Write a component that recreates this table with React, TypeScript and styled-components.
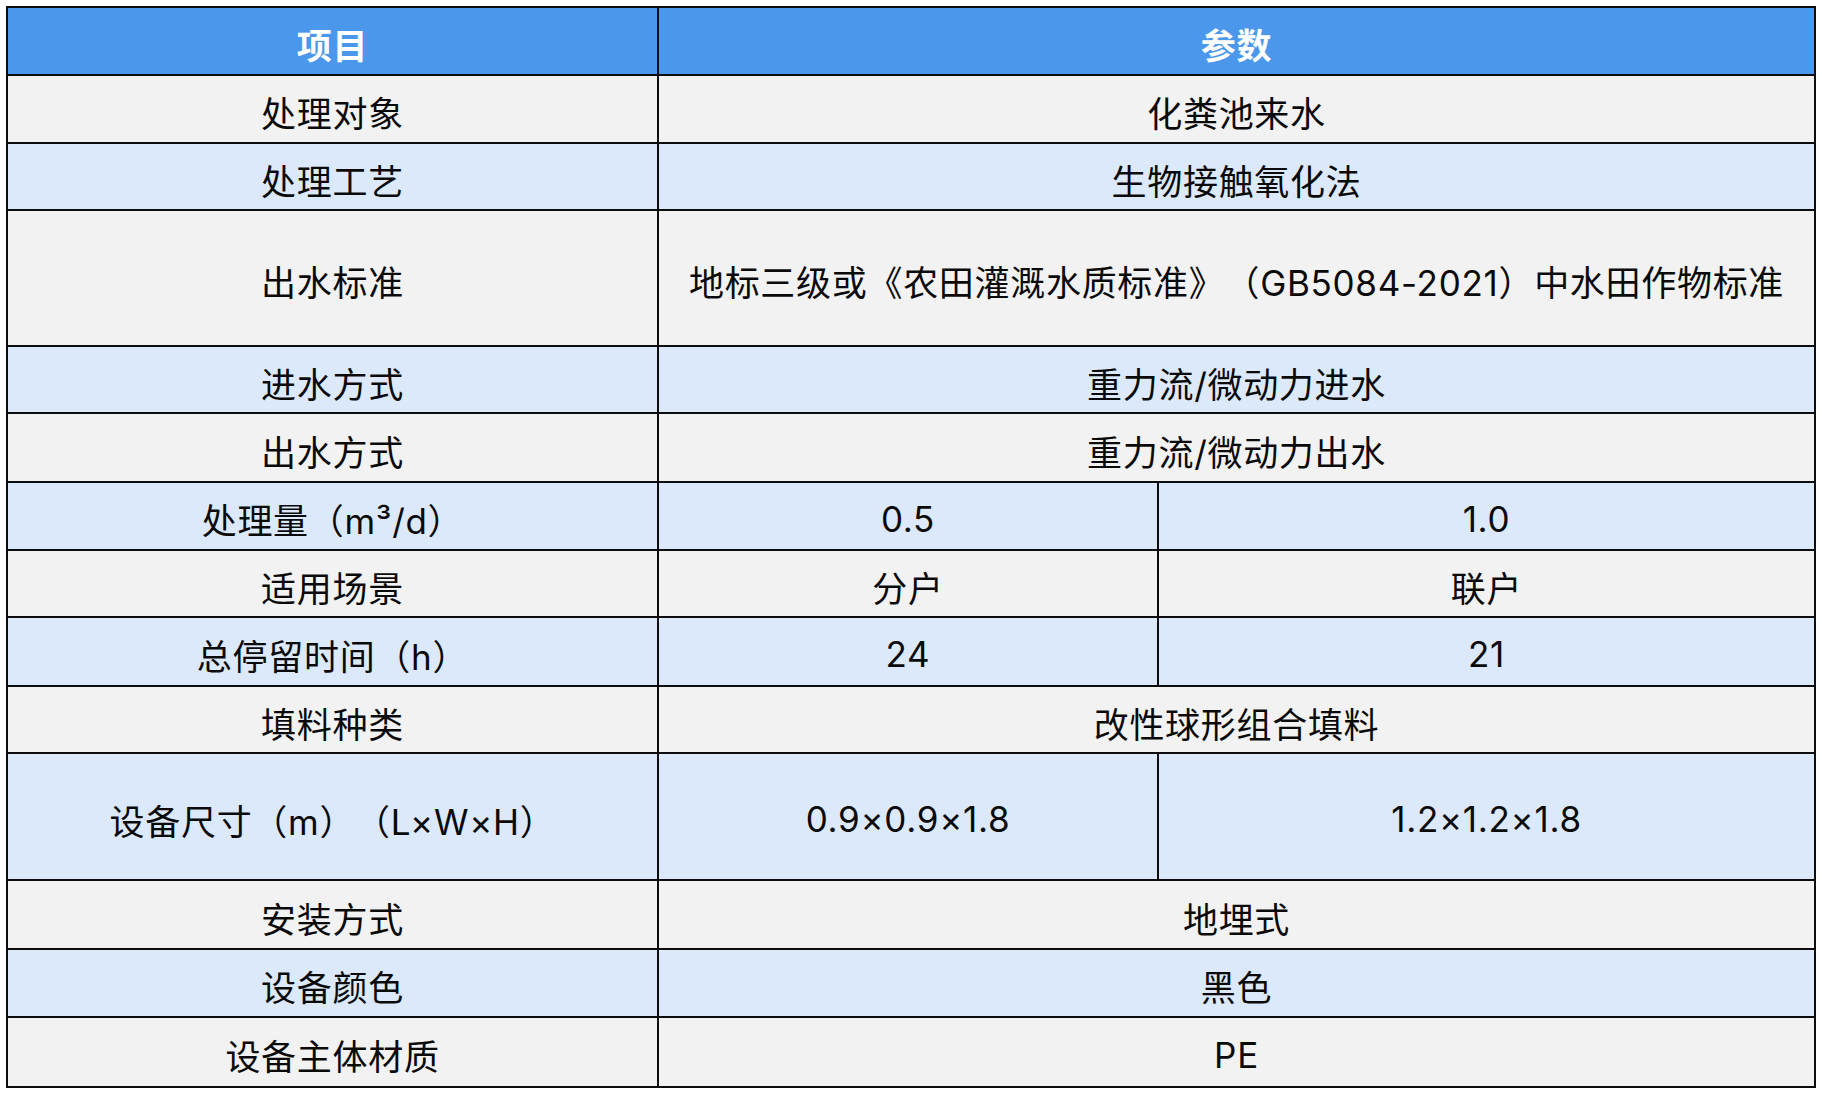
import * as React from 'react'
import styled, {createGlobalStyle} from 'styled-components'

const GlobalStyle = createGlobalStyle`
  html, body {
    margin: 0;
    padding: 0;
    background: #ffffff;
  }
  body {
    font-family: Inter, 'Noto Sans CJK SC', sans-serif;
    text-spacing-trim: space-all;
  }
`

const Page = styled.div`
  padding: 6px 0 0 6px;
`

const Table = styled.table`
  width: 1810px;
  border-collapse: collapse;
  table-layout: fixed;
  border: 2px solid #0d0d0d;
`

const Row = styled.tr<{$tone: 'head' | 'grey' | 'blue'; $h?: number}>`
  height: ${p => p.$h ?? 68}px;
  background: ${p =>
    p.$tone === 'head' ? '#4a97eb' : p.$tone === 'blue' ? '#dce9fa' : '#f2f2f2'};
`

const HeadCell = styled.th`
  border: 2px solid #0d0d0d;
  padding: 5px 0 0;
  color: #ffffff;
  font-size: 35px;
  font-weight: 700;
  letter-spacing: 0.7px;
  text-align: center;
  vertical-align: middle;
`

const Cell = styled.td`
  border: 2px solid #0d0d0d;
  padding: 5px 0 0;
  color: #0a0a0a;
  font-size: 35px;
  font-weight: 400;
  letter-spacing: 0.7px;
  text-align: center;
  vertical-align: middle;
  white-space: nowrap;
  text-spacing-trim: space-all;
`

type Item = {label: string; values: string[]; h?: number}

const items: Item[] = [
  {label: '处理对象', values: ['化粪池来水']},
  {label: '处理工艺', values: ['生物接触氧化法'], h: 67},
  {
    label: '出水标准',
    values: ['地标三级或《农田灌溉水质标准》（GB5084-2021）中水田作物标准'],
    h: 136,
  },
  {label: '进水方式', values: ['重力流/微动力进水'], h: 67},
  {label: '出水方式', values: ['重力流/微动力出水'], h: 69},
  {label: '处理量（m³/d）', values: ['0.5', '1.0']},
  {label: '适用场景', values: ['分户', '联户'], h: 67},
  {label: '总停留时间（h）', values: ['24', '21'], h: 69},
  {label: '填料种类', values: ['改性球形组合填料'], h: 67},
  {label: '设备尺寸（m）（L×W×H）', values: ['0.9×0.9×1.8', '1.2×1.2×1.8'], h: 127},
  {label: '安装方式', values: ['地埋式'], h: 69},
  {label: '设备颜色', values: ['黑色']},
  {label: '设备主体材质', values: ['PE'], h: 70},
]

const App = () => (
  <Page>
    <GlobalStyle />
    <Table>
      <colgroup>
        <col style={{width: 651}} />
        <col style={{width: 500}} />
        <col />
      </colgroup>
      <tbody>
        <Row $tone="head">
          <HeadCell>项目</HeadCell>
          <HeadCell colSpan={2}>参数</HeadCell>
        </Row>
        {items.map((it, i) => (
          <Row key={it.label} $tone={i % 2 === 0 ? 'grey' : 'blue'} $h={it.h}>
            <Cell>{it.label}</Cell>
            {it.values.length === 1 ? (
              <Cell colSpan={2}>{it.values[0]}</Cell>
            ) : (
              it.values.map(v => <Cell key={v}>{v}</Cell>)
            )}
          </Row>
        ))}
      </tbody>
    </Table>
  </Page>
)

export default App
